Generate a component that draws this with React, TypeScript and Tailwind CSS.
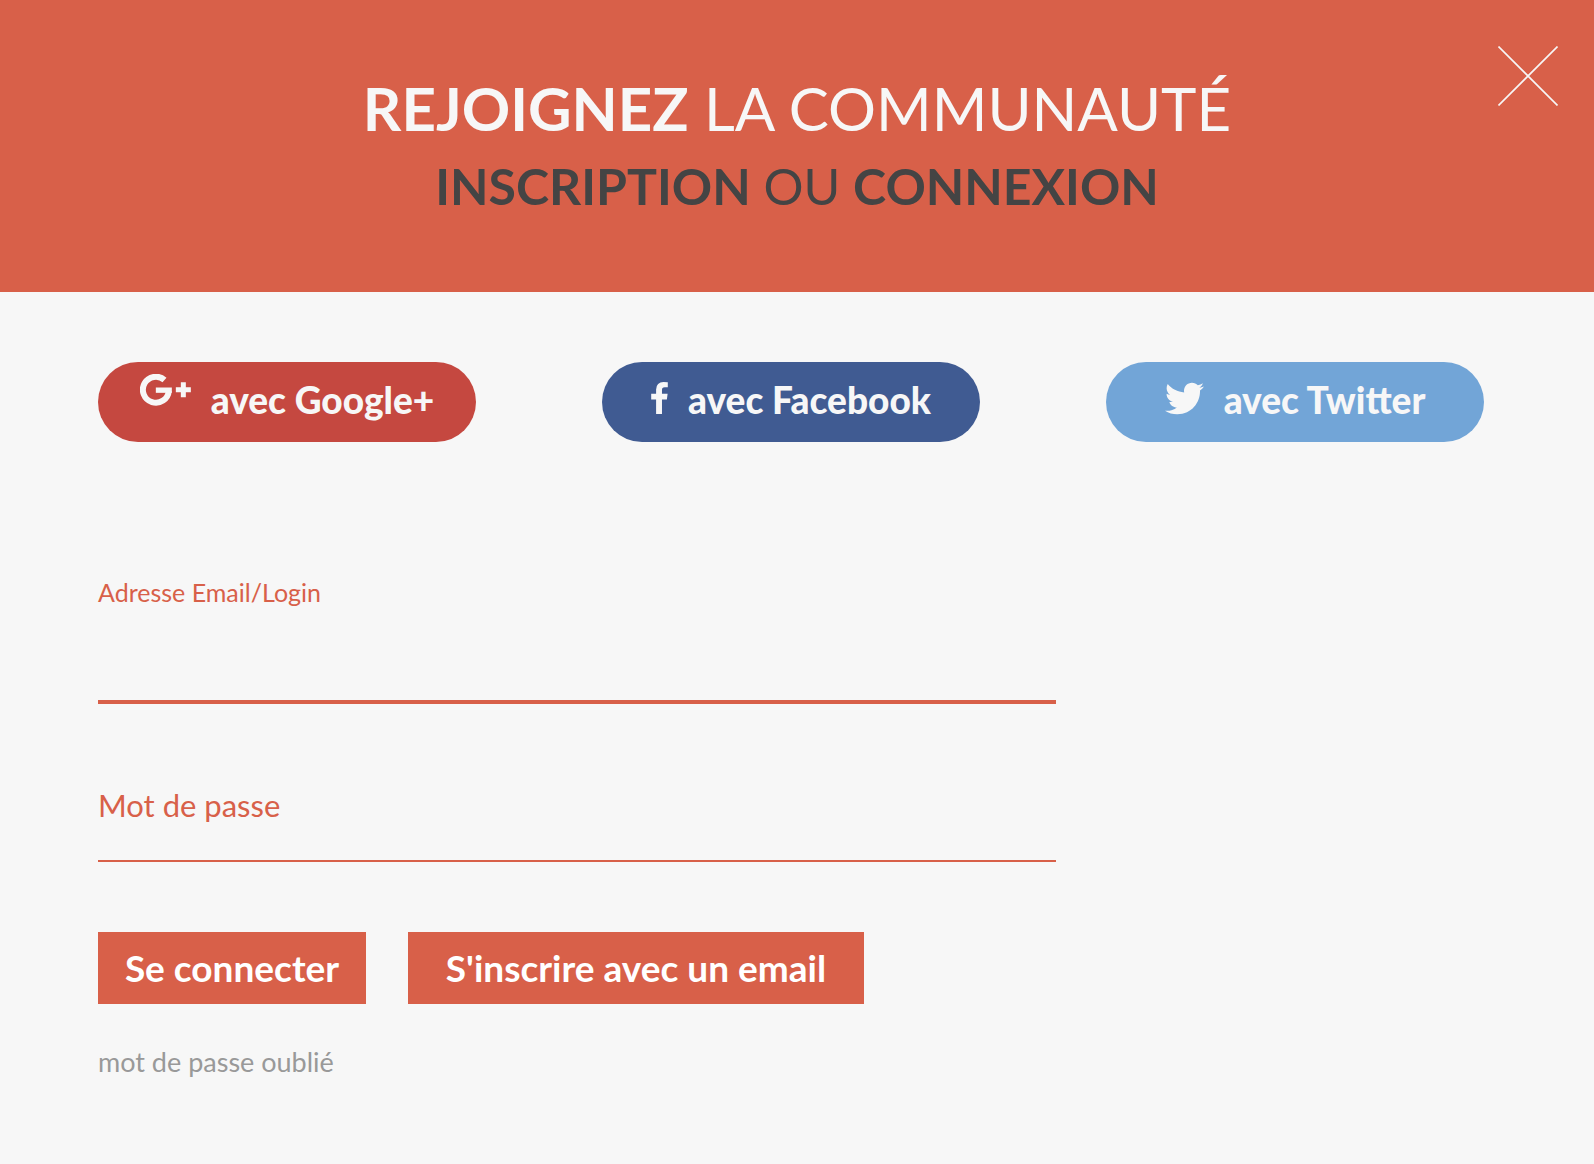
import type { ReactNode } from 'react'
import { FaTwitter } from 'react-icons/fa'

function GooglePlusIcon() {
  return (
    <svg viewBox="0 0 152 96" className="w-[51px] h-8 mb-6" fill="none" stroke="currentColor" aria-hidden="true">
      {/* G */}
      <path d="M73 18 A39 39 0 1 0 86 51" strokeWidth="18" />
      <path d="M47 48.5 H95" strokeWidth="16" />
      {/* Plus */}
      <path d="M107 47.5 H152 M129.5 25 V70" strokeWidth="15" />
    </svg>
  )
}

function FacebookIcon() {
  return (
    <svg viewBox="479 0 864 1664" className="w-[17px] h-8 mb-2" fill="currentColor" aria-hidden="true">
      <path d="M1343 12v264h-157q-86 0-116 36t-30 108v189h293l-39 296h-254v759H734V905H479V609h255V391q0-186 104-288.5T1115 0q147 0 228 12z" />
    </svg>
  )
}

function CloseIcon() {
  return (
    <svg viewBox="0 0 60 60" className="size-[60px]" fill="none" stroke="currentColor" strokeWidth="1.6" aria-hidden="true">
      <path d="M0.5 0.5 L59.5 59.5 M59.5 0.5 L0.5 59.5" />
    </svg>
  )
}

function SocialButton({ icon, color, children }: { icon: ReactNode; color: string; children: ReactNode }) {
  return (
    <button
      type="button"
      className={`flex h-20 items-center justify-center gap-5 rounded-full text-[37px] leading-10 font-black whitespace-nowrap ${color}`}
    >
      {icon}
      <span className="pb-1">{children}</span>
    </button>
  )
}

export default function App() {
  return (
    <main className="min-h-screen bg-[#f7f7f7] font-['Lato',sans-serif]">
      {/* HEADER */}
      <header className="relative bg-[#d86049] pt-[66px] pb-[70px] text-center">
        <h1 className="text-[60px] leading-[84px] text-[#f7f7f7]">
          <strong className="font-bold">REJOIGNEZ</strong> LA COMMUNAUTÉ
        </h1>
        <p className="text-[50px] leading-[72px] text-[#444]">
          <strong className="font-bold">INSCRIPTION</strong> OU <strong className="font-bold">CONNEXION</strong>
        </p>
        <button type="button" aria-label="Fermer" className="absolute top-[46px] right-9 text-[#f7f7f7]">
          <CloseIcon />
        </button>
      </header>

      <div className="pt-[70px] pr-[110px] pb-[70px] pl-[98px]">
        {/* SOCIAL LOGIN */}
        <div className="grid grid-cols-3 gap-[126px] text-[#f7f7f7]">
          <SocialButton icon={<GooglePlusIcon />} color="bg-[#c54840]">
            avec Google+
          </SocialButton>
          <SocialButton icon={<FacebookIcon />} color="bg-[#405b92]">
            avec Facebook
          </SocialButton>
          <SocialButton icon={<FaTwitter className="mb-2 size-[39px]" />} color="bg-[#72a5d7]">
            avec Twitter
          </SocialButton>
        </div>

        {/* LOGIN FORM */}
        <form className="mt-[130px]">
          <div className="w-[70%] max-w-[958px]">
            <label htmlFor="login" className="block text-[25px] leading-10 text-[#d86049]">
              Adresse Email/Login
            </label>
            <input
              id="login"
              type="text"
              className="block h-[92px] w-full border-b-4 border-[#d86049] pt-6 text-[31px] text-[#444] outline-none"
            />
            <div className="relative mt-[66px]">
              <label htmlFor="password" className="absolute top-3 left-0 text-[31px] leading-[46px] text-[#d86049]">
                Mot de passe
              </label>
              <input
                id="password"
                type="password"
                className="block h-[92px] w-full border-b-2 border-[#d86049] text-[31px] text-[#444] outline-none"
              />
            </div>
          </div>

          <div className="mt-[70px] flex gap-[42px] text-[37px] leading-10 font-bold text-white">
            <button type="submit" className="h-[72px] min-w-[268px] bg-[#d86049] px-6">
              Se connecter
            </button>
            <button type="button" className="h-[72px] min-w-[456px] bg-[#d86049] px-6">
              S'inscrire avec un email
            </button>
          </div>

          <a href="#" className="mt-[38px] inline-block text-[27px] leading-10 text-[#999]">
            mot de passe oublié
          </a>
        </form>
      </div>
    </main>
  )
}
